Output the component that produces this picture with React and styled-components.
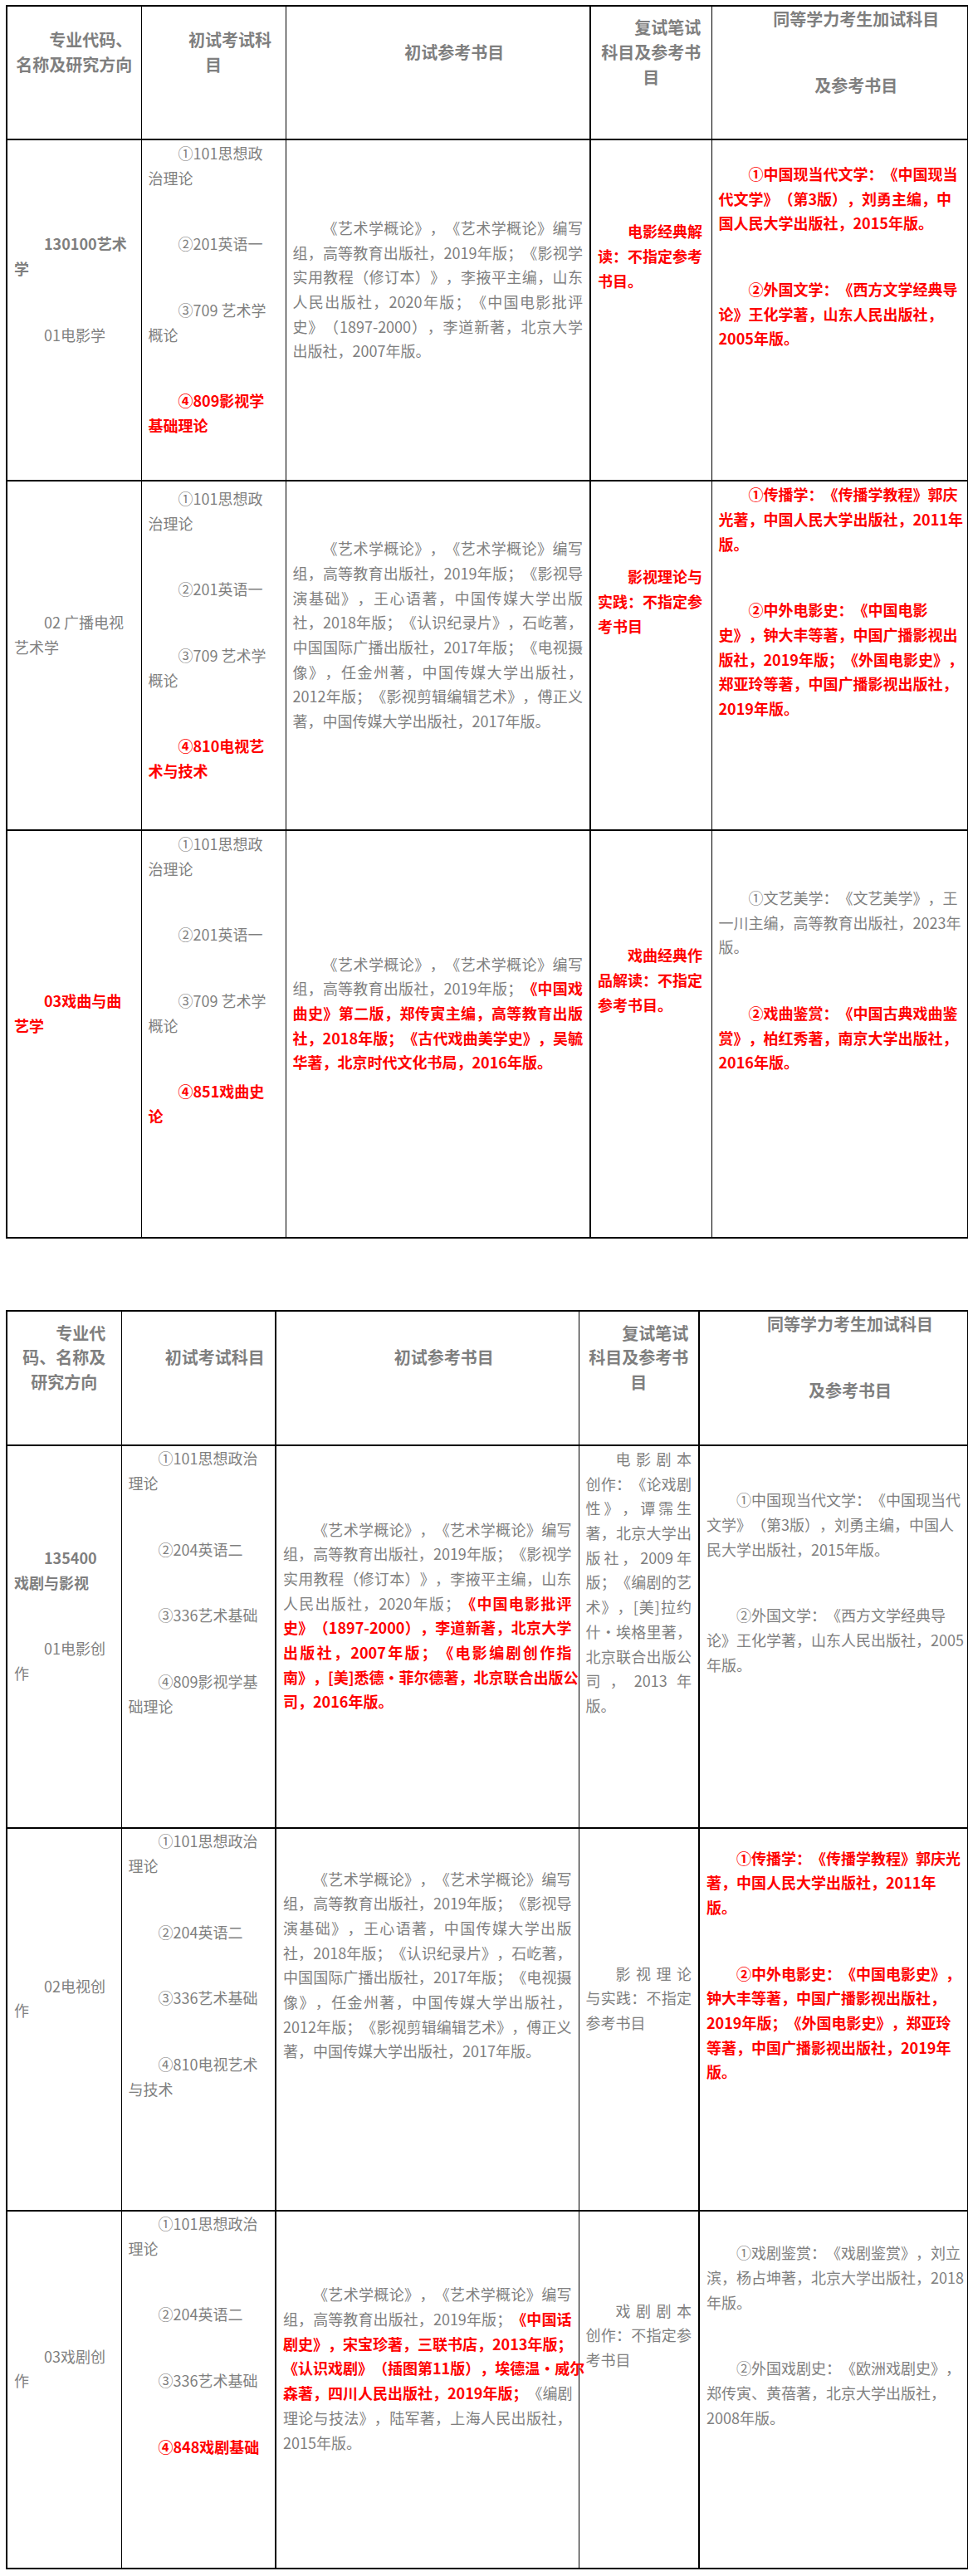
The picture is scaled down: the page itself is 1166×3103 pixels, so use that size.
import React from "react";
import styled, { createGlobalStyle } from "styled-components";

/* -------------------------------------------------------------------------- */
/*                                   Colours                                  */
/* -------------------------------------------------------------------------- */
const GREY = "#7f7f7f";
const RED = "#ff0000";
const LINE = "#000";

/* ------------------------------ Data helpers ------------------------------ */
// a paragraph is a list of lines as they wrap in the printed table;
// text between ** ** is the red, bold mark-up inside a grey paragraph
const plain = (...lines) => ({ kind: "plain", lines });
const strong = (...lines) => ({ kind: "strong", lines });
const red = (...lines) => ({ kind: "red", lines });
const cell = (paras, tail = false) => ({ paras, tail });

const BOOKS_FILM = [
  "《艺术学概论》，《艺术学概论》编写",
  "组，高等教育出版社，2019年版；《影视学",
  "实用教程（修订本）》，李掖平主编，山东",
];

const BOOKS_TV = [
  "《艺术学概论》，《艺术学概论》编写",
  "组，高等教育出版社，2019年版；《影视导",
  "演基础》，王心语著，中国传媒大学出版",
  "社，2018年版；《认识纪录片》，石屹著，",
  "中国国际广播出版社，2017年版；《电视摄",
  "像》，任金州著，中国传媒大学出版社，",
  "2012年版；《影视剪辑编辑艺术》，傅正义",
  "著，中国传媒大学出版社，2017年版。",
];

const TABLE_ONE = {
  widths: [162, 174, 367, 146, 309],
  thick: [false, false, false, true, false],
  justify: [false, false, true, false, false],
  head: [
    [strong("专业代码、", "名称及研究方向")],
    [strong("初试考试科", "目")],
    [strong("初试参考书目")],
    [strong("复试笔试", "科目及参考书", "目")],
    [strong("同等学力考生加试科目"), strong("及参考书目")],
  ],
  rows: [
    {
      height: 411,
      cells: [
        cell([strong("130100艺术", "学"), plain("01电影学")]),
        cell([
          plain("①101思想政", "治理论"),
          plain("②201英语一"),
          plain("③709 艺术学", "概论"),
          red("④809影视学", "基础理论"),
        ]),
        cell([
          plain(
            ...BOOKS_FILM,
            "人民出版社，2020年版；《中国电影批评",
            "史》（1897-2000），李道新著，北京大学",
            "出版社，2007年版。"
          ),
        ]),
        cell([red("电影经典解", "读：不指定参考", "书目。")], true),
        cell(
          [
            red(
              "①中国现当代文学：《中国现当",
              "代文学》（第3版），刘勇主编，中",
              "国人民大学出版社，2015年版。"
            ),
            red("②外国文学：《西方文学经典导", "论》王化学著，山东人民出版社，", "2005年版。"),
          ],
          true
        ),
      ],
    },
    {
      height: 421,
      cells: [
        cell([plain("02 广播电视", "艺术学")]),
        cell([
          plain("①101思想政", "治理论"),
          plain("②201英语一"),
          plain("③709 艺术学", "概论"),
          red("④810电视艺", "术与技术"),
        ]),
        cell([plain(...BOOKS_TV)]),
        cell([red("影视理论与", "实践：不指定参", "考书目")], true),
        cell(
          [
            red("①传播学：《传播学教程》郭庆", "光著，中国人民大学出版社，2011年", "版。"),
            red(
              "②中外电影史：《中国电影",
              "史》，钟大丰等著，中国广播影视出",
              "版社，2019年版；《外国电影史》，",
              "郑亚玲等著，中国广播影视出版社，",
              "2019年版。"
            ),
          ],
          true
        ),
      ],
    },
    {
      height: 491,
      cells: [
        cell([red("03戏曲与曲", "艺学")]),
        cell(
          [
            plain("①101思想政", "治理论"),
            plain("②201英语一"),
            plain("③709 艺术学", "概论"),
            red("④851戏曲史", "论"),
          ],
          true
        ),
        cell([
          plain(
            "《艺术学概论》，《艺术学概论》编写",
            "组，高等教育出版社，2019年版；**《中国戏**",
            "**曲史》第二版，郑传寅主编，高等教育出版**",
            "**社，2018年版；《古代戏曲美学史》，吴毓**",
            "**华著，北京时代文化书局，2016年版。**"
          ),
        ]),
        cell([red("戏曲经典作", "品解读：不指定", "参考书目。")], true),
        cell(
          [
            plain("①文艺美学：《文艺美学》，王", "一川主编，高等教育出版社，2023年", "版。"),
            red("②戏曲鉴赏：《中国古典戏曲鉴", "赏》，柏红秀著，南京大学出版社，", "2016年版。"),
          ],
          true
        ),
      ],
    },
  ],
};

const TABLE_TWO = {
  widths: [138, 186, 365, 145, 324],
  thick: [false, false, true, false, true],
  justify: [false, false, true, true, false],
  head: [
    [strong("专业代", "码、名称及", "研究方向")],
    [strong("初试考试科目")],
    [strong("初试参考书目")],
    [strong("复试笔试", "科目及参考书", "目")],
    [strong("同等学力考生加试科目"), strong("及参考书目")],
  ],
  rows: [
    {
      height: 461,
      cells: [
        cell([strong("135400", "戏剧与影视"), plain("01电影创", "作")]),
        cell(
          [
            plain("①101思想政治", "理论"),
            plain("②204英语二"),
            plain("③336艺术基础"),
            plain("④809影视学基", "础理论"),
          ],
          true
        ),
        cell([
          plain(
            ...BOOKS_FILM,
            "人民出版社，2020年版；**《中国电影批评**",
            "**史》（1897-2000），李道新著，北京大学**",
            "**出版社，2007年版；《电影编剧创作指**",
            "**南》，[美]悉德·菲尔德著，北京联合出版公**",
            "**司，2016年版。**"
          ),
        ]),
        cell(
          [
            plain(
              "电影剧本",
              "创作：《论戏剧",
              "性》，谭霈生",
              "著，北京大学出",
              "版社，2009年",
              "版；《编剧的艺",
              "术》，[美]拉约",
              "什·埃格里著，",
              "北京联合出版公",
              "司，2013年",
              "版。"
            ),
          ],
          true
        ),
        cell(
          [
            plain(
              "①中国现当代文学：《中国现当代",
              "文学》（第3版），刘勇主编，中国人",
              "民大学出版社，2015年版。"
            ),
            plain("②外国文学：《西方文学经典导", "论》王化学著，山东人民出版社，2005", "年版。"),
          ],
          true
        ),
      ],
    },
    {
      height: 461,
      cells: [
        cell([plain("02电视创", "作")]),
        cell(
          [
            plain("①101思想政治", "理论"),
            plain("②204英语二"),
            plain("③336艺术基础"),
            plain("④810电视艺术", "与技术"),
          ],
          true
        ),
        cell([plain(...BOOKS_TV)], true),
        cell([plain("影视理论", "与实践：不指定", "参考书目")]),
        cell(
          [
            red("①传播学：《传播学教程》郭庆光", "著，中国人民大学出版社，2011年", "版。"),
            red(
              "②中外电影史：《中国电影史》，",
              "钟大丰等著，中国广播影视出版社，",
              "2019年版；《外国电影史》，郑亚玲",
              "等著，中国广播影视出版社，2019年",
              "版。"
            ),
          ],
          true
        ),
      ],
    },
    {
      height: 431,
      cells: [
        cell([plain("03戏剧创", "作")]),
        cell(
          [
            plain("①101思想政治", "理论"),
            plain("②204英语二"),
            plain("③336艺术基础"),
            red("④848戏剧基础"),
          ],
          true
        ),
        cell([
          plain(
            "《艺术学概论》，《艺术学概论》编写",
            "组，高等教育出版社，2019年版；**《中国话**",
            "**剧史》，宋宝珍著，三联书店，2013年版；**",
            "**《认识戏剧》（插图第11版），埃德温·威尔**",
            "**森著，四川人民出版社，2019年版；**《编剧",
            "理论与技法》，陆军著，上海人民出版社，",
            "2015年版。"
          ),
        ]),
        cell([plain("戏剧剧本", "创作：不指定参", "考书目")], true),
        cell(
          [
            plain("①戏剧鉴赏：《戏剧鉴赏》，刘立", "滨，杨占坤著，北京大学出版社，2018", "年版。"),
            plain("②外国戏剧史：《欧洲戏剧史》，", "郑传寅、黄蓓著，北京大学出版社，", "2008年版。"),
          ],
          true
        ),
      ],
    },
  ],
};

/* -------------------------------------------------------------------------- */
/*                                 Components                                 */
/* -------------------------------------------------------------------------- */
const Segments = ({ text }) =>
  text.split("**").map((part, i) => (i % 2 ? <Mark key={i}>{part}</Mark> : part));

const Paragraph = ({ para, head, justify }) => (
  <Para $kind={para.kind} $head={head}>
    {para.lines.map((line, i) => (
      <Line
        key={i}
        $first={i === 0}
        $head={head}
        $justify={justify && i < para.lines.length - 1}
      >
        <Segments text={line} />
      </Line>
    ))}
  </Para>
);

const DataTable = ({ spec }) => (
  <Table>
    <colgroup>
      {spec.widths.map((w, i) => (
        <Col key={i} $w={w} />
      ))}
    </colgroup>
    <thead>
      <Row $h={161}>
        {spec.head.map((paras, i) => (
          <HeadCell key={i} $thick={spec.thick[i]}>
            {paras.map((p, j) => (
              <Paragraph key={j} para={p} head />
            ))}
          </HeadCell>
        ))}
      </Row>
    </thead>
    <tbody>
      {spec.rows.map((row, r) => (
        <Row key={r} $h={row.height}>
          {row.cells.map((c, i) => (
            <BodyCell key={i} $thick={spec.thick[i]} $tail={c.tail}>
              {c.paras.map((p, j) => (
                <Paragraph key={j} para={p} justify={spec.justify[i]} />
              ))}
            </BodyCell>
          ))}
        </Row>
      ))}
    </tbody>
  </Table>
);

const App = () => (
  <>
    <GlobalStyle />
    <Page lang="zh-CN">
      <DataTable spec={TABLE_ONE} />
      <DataTable spec={TABLE_TWO} />
    </Page>
  </>
);

/* -------------------------------------------------------------------------- */
/*                                   Styles                                   */
/* -------------------------------------------------------------------------- */
const GlobalStyle = createGlobalStyle`
  html, body {
    margin: 0;
    padding: 0;
    background: #fff;
  }
  body {
    font-family: "Noto Sans CJK SC", "Noto Sans", sans-serif;
  }
`;

const Page = styled.div`
  width: 1166px;
  box-sizing: border-box;
  padding: 6px 1px 10px 7px;
  display: flex;
  flex-direction: column;
  gap: 86px;
  text-spacing-trim: space-all;
`;

const Table = styled.table`
  width: 1158px;
  table-layout: fixed;
  border-collapse: collapse;
  border: 2px solid ${LINE};
`;

const Col = styled.col`
  width: ${({ $w }) => $w}px;
`;

const Row = styled.tr`
  height: ${({ $h }) => $h}px;
`;

const BaseCell = styled.td`
  vertical-align: middle;
  border-top: 2px solid ${LINE};
  border-bottom: 2px solid ${LINE};
  border-left: ${({ $thick }) => ($thick ? 2 : 1)}px solid ${LINE};
  overflow: visible;
`;

const HeadCell = styled(BaseCell).attrs({ as: "th" })`
  padding: 0 10px;
  font-weight: inherit;
`;

const BodyCell = styled(BaseCell)`
  padding: 0 8px ${({ $tail }) => ($tail ? 80 : 0)}px;
`;

const Para = styled.div`
  margin-bottom: 50px;
  font-size: ${({ $head }) => ($head ? 20 : 18)}px;
  font-weight: ${({ $kind }) => ($kind === "plain" ? 400 : 700)};
  color: ${({ $kind }) => ($kind === "red" ? RED : GREY)};
`;

const Line = styled.div`
  line-height: 29.7px;
  white-space: nowrap;
  padding-left: ${({ $first }) => ($first ? "2em" : "0")};
  text-align: ${({ $head, $justify }) => ($head ? "center" : $justify ? "justify" : "left")};
  text-align-last: ${({ $head, $justify }) =>
    $head ? "center" : $justify ? "justify" : "auto"};
`;

const Mark = styled.span`
  color: ${RED};
  font-weight: 700;
`;

export default App;
